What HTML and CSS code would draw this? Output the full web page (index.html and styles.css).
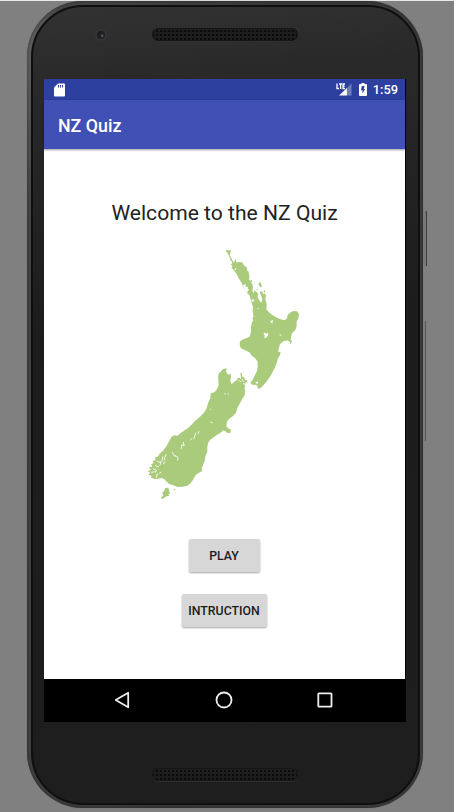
FILE: index.html
```html
<!DOCTYPE html>
<html lang="en">
<head>
<meta charset="utf-8">
<title>NZ Quiz</title>
<link rel="stylesheet" href="styles.css">
</head>
<body>
<div class="phone">
  <span class="side-key power"></span>
  <span class="side-key volume"></span>
  <div class="body">
    <div class="forehead"><span class="camera"></span><span class="speaker"></span></div>
    <div class="screen">
      <div class="status">
        <svg class="sd" width="11" height="14" viewBox="0 0 11 14"><path fill="#fff" d="M4 .5h6q1 0 1 1v11q0 1-1 1H1q-1 0-1-1v-8z"/><path stroke="#2d3f9f" d="M4.500 2v2.500M6.500 2v2.500M8.500 2v2.500"/></svg>
        <svg class="signal" width="17" height="14" viewBox="0 0 17 14"><path fill="#6f7cbf" d="M11 5l4.500-4.500v12H11z"/><path fill="#fff" d="M3 12.500L11 5v7.500z"/><path fill="none" stroke="#fff" stroke-width="1.300" d="M1 .5v5h2M3 1h3M4.600 1v5M9 1H7v4.500h2M7 3.200h1.700"/></svg>
        <svg class="battery" width="8" height="13" viewBox="0 0 8 13"><path fill="#fff" d="M2.500 0h3v1H7q1 0 1 1v10q0 1-1 1H1q-1 0-1-1V2q0-1 1-1h1.500z"/><path fill="#2d3f9f" d="M5.600 3H2.800L2 7.300h1.500V10.500L6 6H4.800z"/></svg>
        <span class="clock">1:59</span>
      </div>
      <header class="appbar">NZ Quiz</header>
      <main class="content">
        <h1>Welcome to the NZ Quiz</h1>
        <svg class="map" width="154" height="252" viewBox="147 249 154 252">
          <g fill="#aacb7b" transform="translate(190 240) scale(.33333)">
            <path d="M108 30L122 31 121 40 119 46 126 58 131 68 134 62 136 55 138 64 140 68 150 65 158 68 163 78 170 82 172 88 169 91 175 93 177 103 179 112 176 117 181 122 186 120 187 124 182 128 186 130 189 142 187 152 190 160 194 151 199 156 204 160 203 172 207 180 214 188 217 178 214 168 210 160 211 153 217 155 220 163 224 160 228 166 226 178 230 192 229 208 236 216 246 224 258 232 272 238 282 241 290 237 293 226 300 218 310 213 321 214 327 223 325 236 320 244 320 258 316 270 306 280 303 290 302 300 306 302 302 314 299 305 292 301 280 304 270 313 266 326 265 335 272 337 270 345 264 355 260 370 254 384 247 398 238 413 228 427 216 440 207 447 202 444 203 437 195 434 186 434 181 428 188 420 195 405 200 395 203 380 203 365 197 356 186 347 178 337 162 329 152 324 149 314 150 304 160 298 170 294 179 290 183 275 183 260 186 245 190 242 187 234 191 230 188 215 189 202 184 185 178 165 170 158 160 142 155 128 148 118 140 103 133 92 124 83 128 78 122 74 127 68 122 60 118 50 113 40 108 34z"/>
            <path d="M207 128l5-2 1 7 3 5-4 5-3-6-4-2zM222 151l4 1-1 5-4-1zM199 147l4 1-2 4z"/>
          </g>
          <g fill="#aacb7b" transform="translate(135 350) scale(.33333)">
            <path d="M264 58L273 55 276 57 273 63 277 72 284 74 287 70 288 80 286 92 290 103 298 95 306 90 308 84 314 83 317 88 318 82 316 70 320 69 322 80 330 83 328 90 336 91 338 97 330 98 332 102 323 98 331 108 328 115 331 124 329 135 322 146 315 160 308 172 303 188 294 198 282 207 276 215 274 228 280 236 287 238 287 248 278 250 272 244 264 241 260 246 250 252 238 260 225 270 219 280 217 292 217 306 211 318 210 330 204 345 200 355 201 364 192 368 182 375 175 388 167 399 157 407 143 410 128 411 115 406 103 402 95 395 88 388 80 384 70 386 60 387 48 383 50 378 40 374 46 369 38 364 48 360 42 352 52 350 48 342 56 340 53 333 62 330 60 322 68 320 74 311 84 302 92 292 97 284 103 272 110 260 118 256 128 257 138 248 150 240 160 233 168 226 180 213 195 200 207 188 215 175 219 160 226 145 227 130 238 127 246 118 251 105 250 90 250 72z"/>
            <path d="M91 414L100 413 102 420 105 430 100 434 104 438 95 439 87 444 80 447 78 443 85 435 81 430 87 424z"/>
            <circle cx="118" cy="419" r="2"/>
          </g>
          <g fill="#fff" transform="translate(190 240) scale(.33333)">
            <path d="M222 277l7 4 5-3 1 6-6 9-6 1 1-8-3-4zM240 244l9-4-2 9 4 2-5-1zM267 283l8 1-4 3zM159 136l9-4-2 8 8 1-1 6 6 3-7 2 2 6-8-3zM177 177l7 2-1 8-4 5zM185 180l6-3 1 6-5 4zM202 203l5 2-4 3zM133 87l8-3-5 7zM196 428l6-4 3 4-4 4z"/>
          </g>
          <g fill="none" stroke="#fff" stroke-width="2.500" transform="translate(135 350) scale(.33333)">
            <path d="M192 244l-3 9M182 248l-6 20M170 265l-4 6M146 275l-2 12 6-3M141 283l-2 14M111 306l8 13 3 1M120 316l9 6-1 9M94 312l-5 10 1 9M84 319l-3 16M78 333l-3 13M90 334l-5 9M65 333l12 5M60 346l12 5M54 356l12 6M48 367l16-2M67 370l-3 13M79 366l-7 5M268 131l5 1M278 130l3 4M225 177l3 2M226 216l7 3M311 91l8 5M320 87l6 9"/>
          </g>
        </svg>
        <button class="btn play">PLAY</button>
        <button class="btn intro">INTRUCTION</button>
      </main>
      <nav class="nav">
        <svg width="16" height="18" viewBox="0 0 16 18"><path d="M14.200 1.700v14.600L1.700 9z"/></svg>
        <svg width="18" height="18" viewBox="0 0 18 18"><circle cx="9" cy="9" r="7.500"/></svg>
        <svg width="16" height="16" viewBox="0 0 16 16"><rect x="1.300" y="1.300" width="13.200" height="13.400" rx=".6"/></svg>
      </nav>
    </div>
    <div class="chin"><span class="speaker"></span></div>
  </div>
</div>
</body>
</html>
```
FILE: styles.css
```css
* { box-sizing: border-box; }
body {
  margin: 0;
  width: 454px;
  height: 812px;
  padding: 1px 0 0 27px;
  overflow: hidden;
  background: linear-gradient(#e8e8e8 1px, #808080 1px);
  font-family: Roboto, "Liberation Sans", sans-serif;
}
.phone {
  position: relative;
  width: 396px;
  height: 807px;
  padding: 4px 3px 3px 4px;
  border-radius: 56px;
  background: linear-gradient(100deg, #666 0, #434343 7%, #363637 50%, #3c3b3c 100%);
  box-shadow: inset 0 0 2px #222, 0 0 1px #555;
}
.side-key { position: absolute; }
.power { left: 396px; top: 210px; width: 4px; height: 55px; background: #777; border-right: 1px solid #3d3b3c; }
.volume { left: 396px; top: 320px; width: 3px; height: 120px; background: #7c7c7c; border-right: 1px solid #555354; }
.body {
  height: 800px;
  padding: 0 12px 0 11px;
  border: 2px solid #0f0f0f;
  border-radius: 52px;
  background: linear-gradient(175deg, #323233 0, #29292a 10%, #1c1c1d 40%, #1e1e1f 100%);
}
.forehead { display: flex; align-items: flex-start; height: 72px; padding: 21px 0 0 51px; }
.camera {
  width: 12px;
  height: 12px;
  margin-top: 1px;
  border: 2px solid #353334;
  border-radius: 50%;
  background: radial-gradient(circle at 65% 60%, #77727a 0, #222128 25%, #17171b 80%);
}
.speaker {
  width: 146px;
  height: 13px;
  border-radius: 7px;
  background: radial-gradient(circle, #0b0b0b .9px, #1d1d1d 1.3px) 3px 1px / 4px 4px;
  box-shadow: inset 0 0 0 1px #161616, 0 1px 0 #303030;
}
.forehead .speaker { margin-left: 45px; }
.screen { width: 362px; height: 643px; background: #000; }
.status { display: flex; align-items: center; width: 361px; height: 21px; padding: 0 7px 0 10px; background: #2d3f9f; color: #fff; }
.signal { margin-left: auto; }
.battery { margin: 0 6px; }
.clock { font-size: 12.800px; font-weight: 500; line-height: 21px; }
.appbar {
  position: relative;
  width: 361px;
  height: 49px;
  padding-left: 14px;
  background: #4150b4;
  box-shadow: 0 1px 2px rgba(0, 0, 0, .4);
  color: #fff;
  font-size: 17.800px;
  font-weight: 500;
  line-height: 51px;
}
.content { display: flex; flex-direction: column; align-items: center; width: 361px; height: 530px; padding-top: 50px; background: #fff; }
h1 { margin: 0; color: #222; font-size: 21.100px; font-weight: 400; line-height: 28px; }
.map { margin: 22px 2px 0 0; }
.btn {
  flex: none;
  height: 33px;
  padding: 0;
  border: 0;
  border-radius: 2px;
  background: #d7d7d7;
  box-shadow: 0 1px 2px rgba(0, 0, 0, .35);
  color: #1c1c1c;
  font: 500 12.300px/32px Roboto, "Liberation Sans", sans-serif;
}
.play { width: 71px; margin: 38px 1px 0 0; }
.intro { width: 85px; margin: 22px 1px 0 0; }
.nav { display: flex; align-items: center; justify-content: space-between; height: 43px; padding: 0 73px 1px 70px; }
.nav svg { fill: none; stroke: #eee; stroke-width: 1.800; stroke-linejoin: round; }
.chin { padding: 46px 0 0 108px; }
.chin .speaker { display: block; }
```
